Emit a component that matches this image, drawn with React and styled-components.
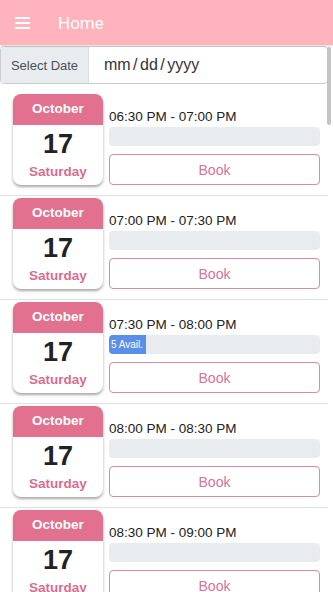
import React from 'react';
import styled, { createGlobalStyle } from 'styled-components';

const Global = createGlobalStyle`
  html, body { margin:0; padding:0; background:#fff; }
  body { font-family: "Liberation Sans", Arial, sans-serif; overflow:hidden; }
`;

const Page = styled.div`
  width:333px;
  height:592px;
  display:flex;
  flex-direction:column;
`;

const TopBar = styled.header`
  height:45px;
  flex:none;
  background:#feb3bd;
  display:flex;
  align-items:center;
  padding-left:15px;
  box-shadow: 0 1px 2px rgba(0,0,0,0.15);
  position:relative;
  z-index:1;
`;

const Burger = styled.div`
  width:15px;
  display:flex;
  flex-direction:column;
  gap:3px;
  margin-right:28px;
  span {
    display:block;
    height:2px;
    background:#fff;
  }
`;

const Title = styled.h1`
  margin:0;
  font-family: Roboto, "Liberation Sans", sans-serif;
  font-weight:400;
  font-size:17px;
  color:#fff;
`;

const Body = styled.div`
  flex:1;
  position:relative;
  overflow:hidden;
`;

const Scroller = styled.div`
  height:100%;
  overflow-y:auto;
  padding-right:5px;
  scrollbar-width:none;
  &::-webkit-scrollbar { display:none; }
`;

const ScrollThumb = styled.div`
  position:absolute;
  top:2px;
  right:2px;
  width:4px;
  height:78px;
  border-radius:2px;
  background:#c4c4c4;
`;

const InputGroup = styled.div`
  display:flex;
  height:36px;
  margin-top:1px;
  border:1px solid #ccc;
  border-radius:4px;
  overflow:hidden;
`;

const Addon = styled.div`
  width:87px;
  background:#e9ecef;
  border-right:1px solid #ddd;
  display:flex;
  align-items:center;
  justify-content:center;
  font-size:13px;
  color:#495057;
`;

const DateField = styled.div`
  flex:1;
  display:flex;
  align-items:center;
  padding-left:15px;
  font-size:16px;
  color:#333;
  word-spacing:-2px;
`;

const List = styled.div`
  margin-top:10px;
`;

const Row = styled.div`
  display:flex;
  gap:6px;
  padding:0 8px 10px 13px;
  & + & {
    border-top:1px solid #e2e2e2;
    padding-top:2px;
  }
`;

const Calendar = styled.div`
  width:90px;
  height:91px;
  flex:none;
  border-radius:8px;
  background:#fff;
  box-shadow: 0 2px 3px rgba(0,0,0,0.35);
  overflow:hidden;
  text-align:center;
  font-weight:700;
`;

const Month = styled.div`
  height:31px;
  background:#e1718f;
  color:#fff;
  font-size:13.5px;
  line-height:29px;
`;

const Day = styled.div`
  font-size:27px;
  color:#222;
  line-height:27px;
  margin-top:6px;
`;

const Weekday = styled.div`
  font-size:13.5px;
  color:#d86d91;
  margin-top:6px;
`;

const Slot = styled.div`
  flex:1;
  padding-top:16px;
`;

const Time = styled.div`
  font-size:13.5px;
  color:#222;
  line-height:14px;
`;

const Bar = styled.div`
  height:19px;
  margin-top:3px;
  background:#e9ecef;
  border-radius:4px;
  overflow:hidden;
  display:flex;
`;

const Fill = styled.div`
  background:#5b8ee6;
  color:#fff;
  font-size:10px;
  line-height:19px;
  padding-left:2px;
  white-space:nowrap;
`;

const BookButton = styled.button`
  display:block;
  width:100%;
  height:31px;
  margin-top:8px;
  background:#fff;
  border:1px solid #da8aa4;
  border-radius:4px;
  color:#d5749a;
  font-family: "Liberation Sans", Arial, sans-serif;
  font-size:14px;
`;

const slots = [
  { time: '06:30 PM - 07:00 PM', avail: 0 },
  { time: '07:00 PM - 07:30 PM', avail: 0 },
  { time: '07:30 PM - 08:00 PM', avail: 5 },
  { time: '08:00 PM - 08:30 PM', avail: 0 },
  { time: '08:30 PM - 09:00 PM', avail: 0 },
  { time: '09:00 PM - 09:30 PM', avail: 0 },
];

const App = () => {
  return (
    <Page>
      <Global />
      <TopBar>
        <Burger>
          <span />
          <span />
          <span />
        </Burger>
        <Title>Home</Title>
      </TopBar>
      <Body>
        <Scroller>
          <InputGroup>
            <Addon>Select Date</Addon>
            <DateField>mm / dd / yyyy</DateField>
          </InputGroup>
          <List>
            {slots.map((s) => (
              <Row key={s.time}>
                <Calendar>
                  <Month>October</Month>
                  <Day>17</Day>
                  <Weekday>Saturday</Weekday>
                </Calendar>
                <Slot>
                  <Time>{s.time}</Time>
                  <Bar>
                    {s.avail > 0 && <Fill style={{ width: `${s.avail * 7}px` }}>{s.avail} Avail.</Fill>}
                  </Bar>
                  <BookButton>Book</BookButton>
                </Slot>
              </Row>
            ))}
          </List>
        </Scroller>
        <ScrollThumb />
      </Body>
    </Page>
  );
};

export default App;
